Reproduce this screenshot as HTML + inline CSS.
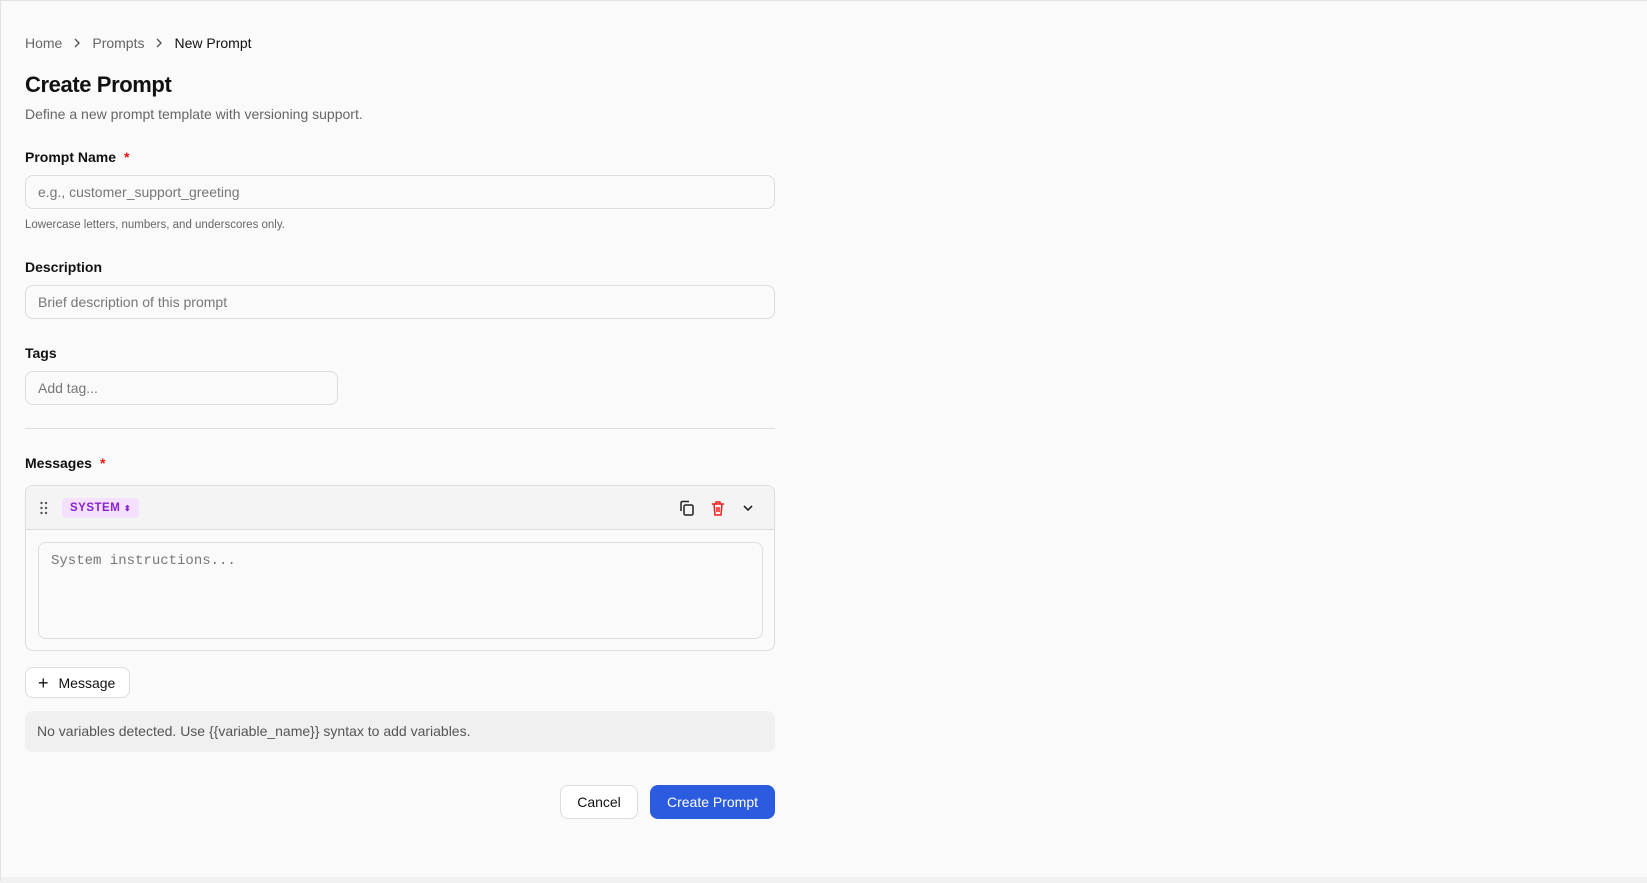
<!DOCTYPE html>
<html><head><meta charset="utf-8"><style>
*{box-sizing:border-box;margin:0;padding:0}
body{width:1647px;height:881px;background:#fafafa;font-family:"Liberation Sans",sans-serif;color:#111;position:relative;overflow:hidden;border-top:1px solid #e2e2e2;border-left:1px solid #e2e2e2}
.a{position:absolute}
.crumb{top:34px;left:24px;font-size:14px;color:#666;display:flex;align-items:center}
.crumb b{font-weight:normal;color:#111}
.crumb svg{margin:0 10px}
h1{position:absolute;top:71px;left:24px;font-size:22px;font-weight:bold;letter-spacing:-0.4px}
.sub{top:105px;left:24px;font-size:14px;color:#666}
.lbl{font-size:14px;font-weight:bold;left:24px}
.lbl i{color:#e11;font-style:normal;margin-left:8px}
.inp{border:1px solid #ddd;border-radius:8px;background:#fafafa;font-size:14px;color:#777;padding-left:12px;display:flex;align-items:center}
.help{font-size:11.5px;color:#666;left:24px;top:218px}
</style></head><body>
<div class="a crumb">Home<svg width="10" height="12" fill="none" stroke="#555" stroke-width="1.4"><path d="M3 2l4 4-4 4"/></svg>Prompts<svg width="10" height="12" fill="none" stroke="#555" stroke-width="1.4"><path d="M3 2l4 4-4 4"/></svg><b>New Prompt</b></div>
<h1>Create Prompt</h1>
<div class="a sub">Define a new prompt template with versioning support.</div>
<div class="a lbl" style="top:148px">Prompt Name<i>*</i></div>
<div class="a inp" style="left:24px;top:174px;width:750px;height:34px">e.g., customer_support_greeting</div>
<div class="a help">Lowercase letters, numbers, and underscores only.</div>
<div class="a lbl" style="top:258px">Description</div>
<div class="a inp" style="left:24px;top:284px;width:750px;height:34px">Brief description of this prompt</div>
<div class="a lbl" style="top:344px">Tags</div>
<div class="a inp" style="left:24px;top:370px;width:313px;height:34px">Add tag...</div>
<div class="a" style="left:24px;top:427px;width:750px;height:1px;background:#ddd"></div>
<div class="a lbl" style="top:454px">Messages<i>*</i></div>
<div class="a" style="left:24px;top:484px;width:750px;height:166px;border:1px solid #ddd;border-radius:8px;background:#fafafa;overflow:hidden">
 <div style="height:44px;background:#f4f4f4;border-bottom:1px solid #ddd;position:relative">
  <svg class="a" style="left:14px;top:15px" width="8" height="14"><g fill="#555"><circle cx="1.5" cy="2" r="1.2"/><circle cx="6" cy="2" r="1.2"/><circle cx="1.5" cy="7" r="1.2"/><circle cx="6" cy="7" r="1.2"/><circle cx="1.5" cy="12" r="1.2"/><circle cx="6" cy="12" r="1.2"/></g></svg>
  <div class="a" style="left:36px;top:12px;height:20px;padding:0 8px;background:#f3e1fd;border-radius:4px;color:#8a1fd0;font-size:11.5px;font-weight:bold;letter-spacing:.5px;line-height:20px">SYSTEM <span style="font-size:8px">⬍</span></div>
  <svg class="a" style="left:652px;top:13px" width="18" height="18" fill="none" stroke="#222" stroke-width="1.5"><rect x="6" y="6" width="9" height="10" rx="1.5"/><path d="M3 12V4a1.5 1.5 0 0 1 1.5-1.5H11"/></svg>
  <svg class="a" style="left:683px;top:13px" width="18" height="18" fill="none" stroke="#e22" stroke-width="1.5"><path d="M3 5h12M7 5V3h4v2M5 5l1 11h6l1-11M8 8v5M10 8v5"/></svg>
  <svg class="a" style="left:715px;top:15px" width="14" height="14" fill="none" stroke="#222" stroke-width="1.6"><path d="M3 5l4 4 4-4"/></svg>
 </div>
 <div class="a" style="left:12px;top:56px;width:725px;height:97px;border:1px solid #ddd;border-radius:8px;background:#fafafa;font-family:'Liberation Mono',monospace;font-size:14px;color:#777;padding:10px 12px">System instructions...</div>
</div>
<div class="a" style="left:24px;top:666px;width:105px;height:31px;border:1px solid #ddd;border-radius:8px;background:#fff;font-size:14px;display:flex;align-items:center;padding-left:12px"><span style="font-size:18px;margin-right:10px;line-height:1">+</span>Message</div>
<div class="a" style="left:24px;top:710px;width:750px;height:41px;background:#f0f0f0;border-radius:8px;font-size:14px;color:#555;padding-left:12px;line-height:41px">No variables detected. Use {{variable_name}} syntax to add variables.</div>
<div class="a" style="left:559px;top:784px;width:78px;height:34px;border:1px solid #ddd;border-radius:8px;background:#fff;font-size:14px;text-align:center;line-height:32px">Cancel</div>
<div class="a" style="left:649px;top:784px;width:125px;height:34px;border-radius:8px;background:#2b5bde;color:#fff;font-size:14px;text-align:center;line-height:34px">Create Prompt</div>
<div class="a" style="left:0;top:876px;width:1647px;height:6px;background:#f1f1f1"></div>
</body></html>
